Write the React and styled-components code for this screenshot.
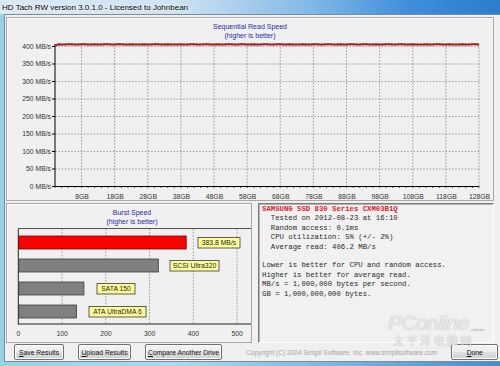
import styled, { createGlobalStyle } from "styled-components";

const GlobalStyle = createGlobalStyle`
  html, body {
    margin: 0;
    padding: 0;
  }
  body {
    width: 500px;
    height: 366px;
    overflow: hidden;
    font-family: "Liberation Sans", Arial, sans-serif;
  }
`;

const Window = styled.div`
  position: relative;
  width: 500px;
  height: 366px;
  display: flex;
  flex-direction: column;
  background: linear-gradient(90deg, #93d3e4 0%, #a9dbec 35%, #6aaee0 75%, #3f8ed4 100%);
  overflow: hidden;
`;

const TitleBar = styled.div`
  height: 14px;
  flex: none;
  padding-left: 2px;
  display: flex;
  align-items: center;
  font-size: 8px;
  color: #000;
  text-shadow: 0 0 4px #fff, 0 0 2px #fff;
  background: linear-gradient(90deg, #dbe9f5 0%, #cfe3f3 35%, #80b9e7 62%, #3f8ddb 82%, #2d7ccd 100%);
`;

const Body = styled.div`
  flex: 1;
  display: flex;
  padding: 0 4px 4px;
`;

const Client = styled.div`
  flex: 1;
  display: flex;
  flex-direction: column;
  background: #f0f0f0;
  border: 1px solid #7d8c9a;
  padding: 2px 1px 1px;
`;

const Panel = styled.div`
  box-sizing: border-box;
  width: ${(p) => p.$w}px;
  height: ${(p) => p.$h}px;
  border: 1px solid #a8a8a8;
  box-shadow: inset 1px 1px 0 #fff;
  background: #f0f0f0;
  svg {
    display: block;
  }
`;

const MiddleRow = styled.div`
  display: flex;
  gap: 6px;
  margin-top: 2px;
`;

const InfoPanel = styled.div`
  box-sizing: border-box;
  width: 236px;
  height: 140px;
  border-style: solid;
  border-width: 1px;
  border-color: #7a7a7a #ffffff #ffffff #7a7a7a;
  box-shadow: inset 1px 1px 0 #b4b4b4;
  background: #f1f1f1;
  padding: 1px 3px;
`;

const InfoText = styled.pre`
  margin: 0;
  font-family: "Liberation Mono", "Courier New", monospace;
  font-size: 7.3px;
  line-height: 9.4px;
  color: #2a2a2a;
  white-space: pre;
`;

const DriveName = styled.span`
  color: #e0202a;
  font-weight: bold;
`;

const ButtonRow = styled.div`
  display: flex;
  align-items: center;
  height: 16px;
  margin-top: 1px;
  padding-left: 8px;
  padding-right: 3px;
  gap: 14px;
`;

const WinButton = styled.button`
  box-sizing: border-box;
  width: ${(p) => p.$w}px;
  height: 16px;
  padding: 0;
  border: 1px solid #707070;
  border-radius: 2px;
  background: linear-gradient(#f4f4f4 0%, #ececec 48%, #dedede 52%, #d0d0d0 100%);
  box-shadow: inset 0 0 0 1px #fbfbfb;
  font-family: "Liberation Sans", Arial, sans-serif;
  font-size: 6.8px;
  color: #111;
  u {
    text-decoration: underline;
  }
`;

const Copyright = styled.div`
  flex: 1;
  text-align: center;
  font-size: 6.6px;
  color: #a4a4a4;
  white-space: nowrap;
  padding-left: 10px;
`;

const Watermark = styled.div`
  position: absolute;
  left: 388px;
  top: 313px;
  display: flex;
  flex-direction: column;
  align-items: flex-start;
  gap: 1px;
  pointer-events: none;
  color: rgba(255, 255, 255, 0.8);
  text-shadow: 0 0 1px rgba(110, 110, 110, 0.7);
`;

const WatermarkLogo = styled.div`
  display: flex;
  align-items: flex-end;
  font-family: "Liberation Sans", Arial, sans-serif;
  font-size: 21px;
  font-style: italic;
  letter-spacing: -0.5px;
  line-height: 20px;
`;

const WatermarkSite = styled.span`
  font-size: 4px;
  line-height: 6px;
  font-style: normal;
  letter-spacing: 0;
  color: rgba(200, 200, 200, 0.8);
  margin-left: 1px;
`;

const WatermarkCn = styled.div`
  font-family: "Noto Sans CJK SC", sans-serif;
  font-size: 11px;
  line-height: 12px;
  letter-spacing: 2.5px;
  padding-left: 5px;
`;

const GB_MARKS = [8, 18, 28, 38, 48, 58, 68, 78, 88, 98, 108, 118, 128];
const MB_MARKS = [0, 50, 100, 150, 200, 250, 300, 350, 400];

const xGB = (g) => 55 + g * 3.3125;
const yMB = (v) => 186.5 - v * 0.35;

function SequentialChart() {
  const line = [];
  for (let g = 0; g <= 128; g += 1) {
    const v = g < 1 ? 402 : 406 + Math.sin(g * 1.7) * 0.6;
    line.push(`${xGB(g).toFixed(1)},${yMB(v).toFixed(1)}`);
  }
  const ticks = [];
  for (let g = 0; g <= 128; g += 2) ticks.push(g);

  return (
    <svg width="486" height="182" viewBox="7 18 486 182">
      <g fontFamily="Liberation Sans, Arial, sans-serif" fontSize="7" textAnchor="middle" fill="#2b2ba6">
        <text x="250" y="29">Sequential Read Speed</text>
        <text x="250" y="37.5">(higher is better)</text>
      </g>
      <g stroke="#8a8a8a" strokeWidth="0.8" strokeDasharray="1.6 1.6">
        {MB_MARKS.slice(1).map((v) => (
          <line key={v} x1="55" x2="479" y1={yMB(v)} y2={yMB(v)} />
        ))}
        {GB_MARKS.map((g) => (
          <line key={g} x1={xGB(g)} x2={xGB(g)} y1="44" y2="186" />
        ))}
      </g>
      <g stroke="#000" strokeWidth="1">
        <line x1="55" x2="55" y1="44" y2="187" />
        <line x1="55" x2="479" y1="186.5" y2="186.5" />
        {MB_MARKS.map((v) => (
          <line key={v} x1="52" x2="55" y1={yMB(v)} y2={yMB(v)} />
        ))}
        {ticks.map((g) => (
          <line key={g} x1={xGB(g)} x2={xGB(g)} y1="186.5" y2="188" strokeWidth="0.7" />
        ))}
      </g>
      <polyline points={line.join(" ")} fill="none" stroke="#a8161a" strokeWidth="2" />
      <g fontFamily="Liberation Sans, Arial, sans-serif" fontSize="6.8" fill="#333">
        {MB_MARKS.map((v) => (
          <text key={v} x="51" y={yMB(v) + 2.4} textAnchor="end">
            {v} MB/s
          </text>
        ))}
        {GB_MARKS.map((g) => (
          <text key={g} x={xGB(g) + 0.5} y="198.5" textAnchor="middle">
            {g}GB
          </text>
        ))}
      </g>
    </svg>
  );
}

const BURST = [
  { label: "383.8 MB/s", value: 383.8, box: [198, 42], fill: "#ff0000", edge: "#7a0000" },
  { label: "SCSI Ultra320", value: 320, box: [170, 49], fill: "#808080", edge: "#3c3c3c" },
  { label: "SATA 150", value: 150, box: [97, 38], fill: "#808080", edge: "#3c3c3c" },
  { label: "ATA UltraDMA 6", value: 133, box: [89, 57], fill: "#808080", edge: "#3c3c3c" },
];

const xMB = (v) => 18.3 + v * 0.4375;

function BurstChart() {
  return (
    <svg width="244" height="138" viewBox="7 204 244 138">
      <g fontFamily="Liberation Sans, Arial, sans-serif" fontSize="7" textAnchor="middle" fill="#2b2ba6">
        <text x="132" y="215">Burst Speed</text>
        <text x="132" y="223.5">(higher is better)</text>
      </g>
      <g stroke="#8a8a8a" strokeWidth="0.8" strokeDasharray="1.6 1.6">
        {[100, 200, 300, 400, 500].map((v) => (
          <line key={v} x1={xMB(v)} x2={xMB(v)} y1="229" y2="323.5" />
        ))}
      </g>
      <g stroke="#222" strokeWidth="1">
        <line x1="18.3" x2="251" y1="228.5" y2="228.5" stroke="#555" />
        <line x1="18.3" x2="18.3" y1="228.5" y2="324.5" />
        <line x1="18.3" x2="251" y1="324" y2="324" />
      </g>
      {BURST.map((b, i) => {
        const y = 236 + i * 23;
        return (
          <g key={b.label}>
            <rect x="18.8" y={y} width={xMB(b.value) - 18.8} height="13" fill={b.fill} stroke={b.edge} strokeWidth="0.8" />
            <rect x={b.box[0]} y={y + 1.5} width={b.box[1]} height="10.5" fill="#ffff99" stroke="#3a3a3a" strokeWidth="0.8" />
            <text
              x={b.box[0] + b.box[1] / 2}
              y={y + 9.3}
              textAnchor="middle"
              fontFamily="Liberation Sans, Arial, sans-serif"
              fontSize="6.8"
              fill="#222"
            >
              {b.label}
            </text>
          </g>
        );
      })}
      <g fontFamily="Liberation Sans, Arial, sans-serif" fontSize="6.8" fill="#333" textAnchor="middle">
        {[0, 100, 200, 300, 400, 500].map((v) => (
          <text key={v} x={xMB(v)} y="335.5">
            {v}
          </text>
        ))}
      </g>
    </svg>
  );
}

export default function App() {
  return (
    <>
      <GlobalStyle />
      <Window>
        <TitleBar>HD Tach RW version 3.0.1.0 - Licensed to Johnbean</TitleBar>
        <Body>
          <Client>
            <Panel $w={488} $h={184}>
              <SequentialChart />
            </Panel>
            <MiddleRow>
              <Panel $w={246} $h={140}>
                <BurstChart />
              </Panel>
              <InfoPanel>
                <InfoText>
                  <DriveName>SAMSUNG SSD 830 Series CXM03B1Q</DriveName>
                  {"\n  Tested on 2012-08-23 at 16:10"}
                  {"\n  Random access: 0.1ms"}
                  {"\n  CPU utilization: 5% (+/- 2%)"}
                  {"\n  Average read: 406.2 MB/s"}
                  {"\n\nLower is better for CPU and random access."}
                  {"\nHigher is better for average read."}
                  {"\nMB/s = 1,000,000 bytes per second."}
                  {"\nGB = 1,000,000,000 bytes."}
                </InfoText>
              </InfoPanel>
            </MiddleRow>
            <ButtonRow>
              <WinButton $w={50}>
                <u>S</u>ave Results
              </WinButton>
              <WinButton $w={53}>
                <u>U</u>pload Results
              </WinButton>
              <WinButton $w={77}>
                <u>C</u>ompare Another Drive
              </WinButton>
              <Copyright>Copyright (C) 2004 Simpli Software, Inc. www.simplisoftware.com</Copyright>
              <WinButton $w={47}>
                <u>D</u>one
              </WinButton>
            </ButtonRow>
          </Client>
        </Body>
        <Watermark>
          <WatermarkLogo>
            PConline<WatermarkSite>.com.cn</WatermarkSite>
          </WatermarkLogo>
          <WatermarkCn>太平洋电脑网</WatermarkCn>
        </Watermark>
      </Window>
    </>
  );
}
